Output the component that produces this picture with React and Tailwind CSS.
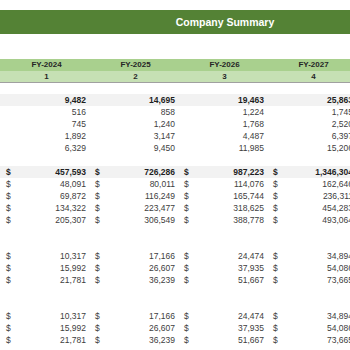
import React from "react";

const top = [
  { bold: true, v: ["9,482", "14,695", "19,463", "25,863"] },
  { v: ["516", "858", "1,224", "1,745"] },
  { v: ["745", "1,240", "1,768", "2,520"] },
  { v: ["1,892", "3,147", "4,487", "6,397"] },
  { v: ["6,329", "9,450", "11,985", "15,206"] },
  { blank: true },
  { bold: true, d: true, v: ["457,593", "726,286", "987,223", "1,346,304"] },
  { d: true, v: ["48,091", "80,011", "114,076", "162,646"] },
  { d: true, v: ["69,872", "116,249", "165,744", "236,311"] },
  { d: true, v: ["134,322", "223,477", "318,625", "454,283"] },
  { d: true, v: ["205,307", "306,549", "388,778", "493,064"] },
  { blank: true },
  { blank: true },
  { d: true, v: ["10,317", "17,166", "24,474", "34,894"] },
  { d: true, v: ["15,992", "26,607", "37,935", "54,086"] },
  { d: true, v: ["21,781", "36,239", "51,667", "73,665"] },
  { blank: true },
  { blank: true },
  { d: true, v: ["10,317", "17,166", "24,474", "34,894"] },
  { d: true, v: ["15,992", "26,607", "37,935", "54,086"] },
  { d: true, v: ["21,781", "36,239", "51,667", "73,665"] },
];

function Row({ r }) {
  if (r.blank) return <div className="h-[12px]" />;
  return (
    <div
      className={
        "flex h-[12px] items-center " +
        (r.bold ? "bg-[#f2f2f2] font-bold text-[#1f1f1f]" : "text-[#404040]")
      }
    >
      <div className="w-[2px] shrink-0" />
      {r.v.map((x, i) => (
        <div
          key={i}
          className="flex w-[89px] shrink-0 items-center justify-between pl-[4px] pr-[5px]"
        >
          <span>{r.d ? "$" : ""}</span>
          <span>{x}</span>
        </div>
      ))}
    </div>
  );
}

export default function App() {
  const fy = ["FY-2024", "FY-2025", "FY-2026", "FY-2027"];
  return (
    <div
      className="w-[350px] h-[350px] overflow-hidden bg-white text-[8.5px] leading-none"
      style={{ fontFamily: '"Liberation Sans", Arial, sans-serif' }}
    >
      <div className="h-[10px]" />
      <div className="flex h-[24px] w-[450px] items-center justify-center bg-[#548235] text-[10.5px] font-bold text-white">
        Company Summary
      </div>
      <div className="h-[25px]" />
      <div className="flex h-[12px] items-center bg-[#a9d08e] font-bold text-[#262626] text-[8px]">
        <div className="w-[2px] shrink-0" />
        {fy.map((f) => (
          <div key={f} className="w-[89px] shrink-0 text-center">
            {f}
          </div>
        ))}
      </div>
      <div className="flex h-[12px] items-center bg-[#c6e0b4] font-bold text-[#262626] text-[8px] border-b border-[#a0a0a0]">
        <div className="w-[2px] shrink-0" />
        {[1, 2, 3, 4].map((n) => (
          <div key={n} className="w-[89px] shrink-0 text-center">
            {n}
          </div>
        ))}
      </div>
      <div className="h-[11px]" />
      {top.map((r, i) => (
        <Row key={i} r={r} />
      ))}
    </div>
  );
}
